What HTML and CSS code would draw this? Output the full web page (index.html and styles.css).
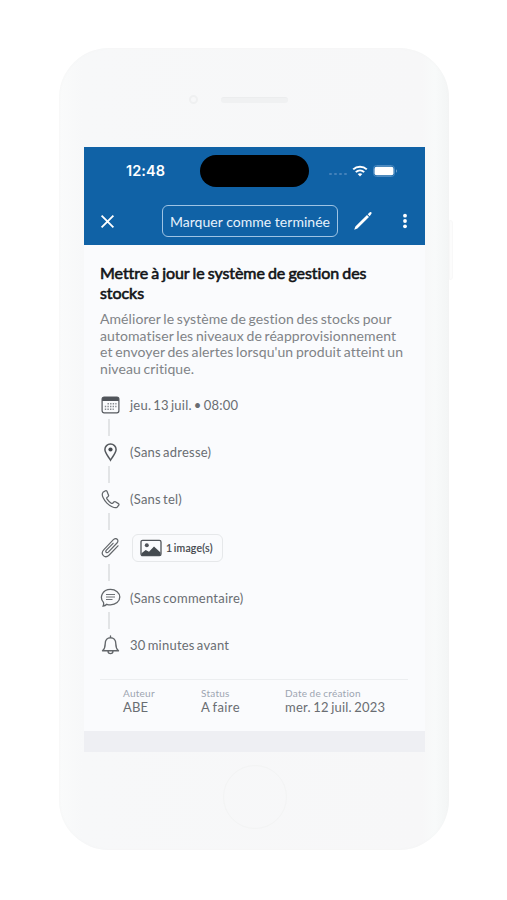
FILE: index.html
```html
<!DOCTYPE html>
<html lang="fr">
<head>
<meta charset="utf-8">
<title>Tâche</title>
<link rel="stylesheet" href="styles.css">
</head>
<body>
<main class="phone">
  <span class="side-button"></span>
  <div class="earpiece"><span class="camera"></span><span class="speaker"></span></div>
  <section class="screen">
    <header class="header">
      <div class="status-bar">
        <span class="clock">12:48</span>
        <span class="island"></span>
        <span class="dots"><i></i><i></i><i></i><i></i></span>
        <svg class="wifi" viewBox="0 0 16 12"><g fill="none" stroke="#fff" stroke-width="2"><path d="M1.2 4.4C5 .7 11 .7 14.8 4.4"/><path d="M3.8 7.1c2.4-2.3 6-2.3 8.4 0"/></g><path d="M5.7 9.1c1.3-1.2 3.3-1.2 4.6 0L8 11.5z" fill="#fff"/></svg>
        <svg class="battery" viewBox="0 0 25 12"><rect x=".5" y=".5" width="21" height="11" rx="3.2" fill="none" stroke="#4d8bc2"/><rect x="1.5" y="1.700" width="19" height="8.600" rx="2" fill="#fff"/><path d="M23 4.2c1.3.6 1.3 3 0 3.6z" fill="#6fa0cd"/></svg>
      </div>
      <nav class="toolbar">
        <svg class="close" viewBox="0 0 14 14"><path d="M1.500 1.500l11 11M12.500 1.500l-11 11" stroke="#fff" stroke-width="1.700"/></svg>
        <button class="done">Marquer comme terminée</button>
        <svg class="pencil" viewBox="0 0 20 20"><path d="M1.200 18.800l1.200-3.200L14 4l2 2L4.400 17.600zM14.700 3.300L16.800 1.200q.8-.6 1.500.1t.1 1.500L16.700 5.300z" fill="#fff"/></svg>
        <svg class="more" viewBox="0 0 6 16"><g fill="#fff"><circle cx="3" cy="2.700" r="1.900"/><circle cx="3" cy="8" r="1.900"/><circle cx="3" cy="13.300" r="1.900"/></g></svg>
      </nav>
    </header>
    <article class="task">
      <h1><span>Mettre à jour le système de gestion des</span><br><span>stocks</span></h1>
      <p class="description"><span>Améliorer le système de gestion des stocks pour</span><br><span>automatiser les niveaux de réapprovisionnement</span><br><span>et envoyer des alertes lorsqu'un produit atteint un</span><br><span>niveau critique.</span></p>
      <ul class="details">
        <li><svg class="icon" viewBox="0 0 20 20"><rect x="1.600" y="2.200" width="16.800" height="15.600" rx="2" fill="none" stroke="#55595e" stroke-width="1.200"/><path d="M1.600 6V4q0-2 2-2h12.800q2 0 2 2v2z" fill="#50545a"/><g stroke="#85898e" stroke-width="1.400" stroke-dasharray="1.400 1.200"><path d="M7 8.700h9M4.300 11.500h11.700M4.300 14.300h9"/></g></svg><span>jeu. 13 juil. • 08:00</span></li>
        <li><svg class="icon" viewBox="0 0 20 20"><path d="M10 18.200C8 14.700 4.400 11 4.400 7.600a5.600 5.600 0 0 1 11.200 0C15.600 11 12 14.700 10 18.200z" fill="none" stroke="#55595e" stroke-width="1.500"/><circle cx="10" cy="7.500" r="2.100" fill="#45494e"/></svg><span>(Sans adresse)</span></li>
        <li><svg class="icon" viewBox="0 0 20 20"><path d="M5 1.700L2.500 3.300C.2 6 4 11.700 6.400 14.100c2.700 2.600 7.700 5.700 10.200 4.100l1.700-2q.5-.9-.4-1.600l-3-1.900q-.9-.4-1.600.3l-1.100 1.300q-.7.4-1.500-.1-2.500-1.700-4.300-4.300-.4-.8.1-1.400l1.300-1.100q.6-.7.1-1.500L6.400 2.100Q5.800 1.300 5 1.700z" fill="none" stroke="#62666a" stroke-width="1.250"/></svg><span>(Sans tel)</span></li>
        <li class="attachment"><svg class="icon" viewBox="0 0 20 20"><path d="M12.600 5.300L5.900 12.200c-1.500 1.600.4 3.400 1.900 1.900l8.700-9.100c2.600-2.800-.9-6-3.600-3.300L3.400 11.600c-4.300 4.600 1.100 9.600 5.300 5.400l8.800-9.200" fill="none" stroke="#62666a" stroke-width="1.200" stroke-linecap="round"/></svg><span class="chip"><svg class="picture" viewBox="0 0 22 18"><rect x="1" y="1.300" width="20" height="15.400" rx="1.600" fill="none" stroke="#50545a" stroke-width="1.300"/><circle cx="6.800" cy="6.300" r="2" fill="#50545a"/><path d="M1.500 14.300l4.200-3.400 3.300 1.800 5-5.200 6.500 6V16.400h-19z" fill="#454b50"/></svg><span>1 image(s)</span></span></li>
        <li><svg class="icon" viewBox="0 0 20 20"><path d="M2.800 14.100C-1.300 9.600 1.800 1.400 10 1.400c5.200 0 9.300 3.400 9.300 7.700s-4.100 7.800-9.300 7.800q-2 0-3.700-.6-1.600 1.700-3.700 1.700 1-2.100.2-3.900z" fill="none" stroke="#62666a" stroke-width="1.300"/><path d="M5.500 6.500h9M5.500 9h9M5.500 11.500h6.500" stroke="#707479" stroke-width="1.100"/></svg><span>(Sans commentaire)</span></li>
        <li><svg class="icon" viewBox="0 0 20 20"><path d="M2 15.700c2.200-1.800 2.700-3.600 2.700-7C4.700 5 7 2.700 10 2.700s5.300 2.300 5.300 6c0 3.400.5 5.200 2.700 7zM7.500 16c0 3.400 5 3.400 5 0M10 2.500V1" fill="none" stroke="#62666a" stroke-width="1.350" stroke-linejoin="round" stroke-linecap="round"/></svg><span>30 minutes avant</span></li>
      </ul>
      <dl class="meta">
        <div><dt>Auteur</dt><dd>ABE</dd></div>
        <div><dt>Status</dt><dd class="state">A faire</dd></div>
        <div><dt>Date de création</dt><dd>mer. 12 juil. 2023</dd></div>
      </dl>
    </article>
    <footer class="bottom"></footer>
  </section>
  <div class="home"></div>
</main>
</body>
</html>
```
FILE: styles.css
```css
* { box-sizing: border-box; }
body { margin: 0; background: #fff; font-family: Lato, "Liberation Sans", sans-serif; font-variant-ligatures: none; color: #696d72; }
svg { display: block; flex: none; }
.phone { position: relative; width: 390px; height: 802px; margin: 48px 0 0 59px; padding: 0 24px 0 25px; border-radius: 50px; background: linear-gradient(90deg, #fafbfb 0, #f7f8f9 24px, #f7f7f8 362px, #f8fafa 376px, #f3f5f5 100%); box-shadow: inset 0 0 3px #f3f4f4; }
.side-button { position: absolute; left: 390px; top: 172px; width: 4px; height: 60px; border-radius: 0 3px 3px 0; background: #fcfcfc; border: 1px solid #f8f8f8; }
.earpiece { height: 99px; display: flex; align-items: center; padding: 4px 0 0 105px; gap: 23px; }
.camera { width: 9px; height: 9px; border: 2px solid #eff0f1; border-radius: 50%; }
.speaker { width: 67px; height: 6px; border-radius: 3px; background: #f0f1f2; border-top: 1px solid #ecedee; }
.screen { width: 341px; height: 605px; display: flex; flex-direction: column; background: #fafbfd; }
.header { height: 98px; background: #1062a6; color: #fff; }
.status-bar { height: 48px; display: flex; align-items: center; padding-left: 42px; }
.clock { font: 600 14.500px Inter, sans-serif; width: 74px; margin-top: -1px; letter-spacing: .1px; }
.island { width: 109px; height: 32px; border-radius: 16px; background: #000; }
.dots { display: flex; gap: 2.500px; margin: 6px 5px 0 20px; }
.dots i { width: 2.500px; height: 2.500px; border-radius: 50%; background: #4482ba; }
.wifi { width: 16px; height: 12px; }
.battery { width: 25px; height: 12px; margin-left: 5px; }
.toolbar { height: 52px; display: flex; align-items: center; padding: 0 17px 0 16px; }
.close { width: 15px; height: 15px; }
.done { width: 176px; height: 32px; margin-left: 47px; padding: 0; border: 1px solid #9fc4e4; border-radius: 6px; background: none; color: #e7f2fc; font: 14px Lato, sans-serif; letter-spacing: .03px; white-space: nowrap; }
.pencil { width: 20px; height: 20px; margin-left: 15px; }
.more { width: 6px; height: 16px; margin-left: auto; }
.task { flex: 1; padding: 18px 17px 0 16px; }
h1 { margin: 0; font-size: 16px; line-height: 19.500px; font-weight: 400; -webkit-text-stroke: .6px #111316; color: #111316; white-space: nowrap; letter-spacing: -.06px; word-spacing: -.9px; }
.description { margin: 9px 0 0; font-size: 14px; line-height: 16.600px; color: #808387; white-space: nowrap; letter-spacing: .08px; word-spacing: -1px; }
.details { list-style: none; margin: 18px 0 0; padding: 0; }
.details li { height: 20px; display: flex; align-items: center; gap: 9px; position: relative; margin-bottom: 27px; font-size: 13px; white-space: nowrap; letter-spacing: .24px; word-spacing: -1.500px; }
.details li:not(:last-child)::after { content: ""; position: absolute; left: 8px; top: 24px; width: 2px; height: 17px; background: #e2e4e6; }
.details li.attachment { height: 28px; margin: -2px 0 26px; gap: 11px; }
.details li.attachment::after { top: 30px; }
.details li:last-child { margin-bottom: 24px; }
.icon { width: 21px; height: 20px; margin-top: -1px; }
.chip { height: 28px; width: 91px; padding-left: 7px; display: flex; align-items: center; gap: 4px; border: 1.500px solid #e6e8ea; border-radius: 6px; font-size: 10.500px; color: #404449; -webkit-text-stroke: .2px #404449; }
.picture { width: 22px; height: 18px; }
.meta { height: 50px; margin: 0; border-top: 1px solid #eceef0; display: grid; grid-template-columns: 78px 84px 1fr; padding: 7px 0 0 23px; white-space: nowrap; }
dt { font-size: 10px; line-height: 12px; color: #9da5b1; letter-spacing: .25px; word-spacing: -.5px; }
dd { margin: 0; font-size: 13px; line-height: 16px; letter-spacing: .2px; word-spacing: -1px; }
dd.state { letter-spacing: .4px; }
.bottom { height: 21px; background: #eeeff3; }
.home { width: 64px; height: 64px; margin: 13px auto 0; border: 1px solid #f3f4f4; border-radius: 50%; }
```
